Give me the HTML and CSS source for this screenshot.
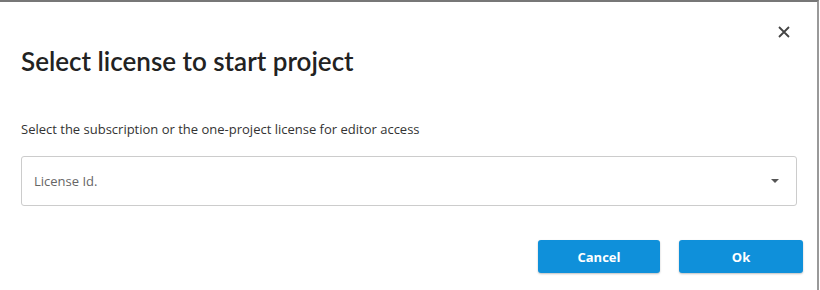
FILE: index.html
```html
<!DOCTYPE html>
<html lang="en">
<head>
  <meta charset="UTF-8" />
  <title>Select license</title>
  <link rel="stylesheet" href="styles.css">
</head>
<body>
  <div class="dialog">
    <div class="dialog-top">
      <button class="close-button" aria-label="Close">
        <svg width="12" height="12" viewBox="0 0 12 12">
          <path d="M1 1 L11 11 M11 1 L1 11" stroke="#444" stroke-width="1.8" fill="none" />
        </svg>
      </button>
    </div>
    <h2 class="dialog-title">Select license to start project</h2>
    <p class="dialog-text">Select the subscription or the one-project license for editor access</p>
    <div class="select-box">
      <span class="placeholder">License Id.</span>
      <span class="caret"></span>
    </div>
    <div class="dialog-footer">
      <button class="btn btn-cancel">Cancel</button>
      <button class="btn btn-ok">Ok</button>
    </div>
  </div>
</body>
</html>
```
FILE: styles.css
```css
body {
  margin: 0;
  font-family: "Open Sans", Arial, sans-serif;
  background-color: #fff;
  color: #222;
}

.dialog {
  width: 819px;
  height: 290px;
  box-sizing: border-box;
  border-top: 2px solid #777;
  border-right: 2px solid #999;
  background-color: #fff;
  padding: 0 20px 0 21px;
}

.dialog-top {
  display: flex;
  justify-content: flex-end;
  padding-top: 24px;
  height: 14px;
}

.close-button {
  background: none;
  border: none;
  padding: 0;
  margin-right: 7px;
  width: 12px;
  height: 12px;
  cursor: pointer;
}

.dialog-title {
  margin: 4px 0 0;
  font-family: Lato, "Open Sans", sans-serif;
  font-size: 26px;
  font-weight: 600;
  line-height: 34px;
  color: #222;
}

.dialog-text {
  margin: 42px 0 0;
  font-size: 13px;
  line-height: 18px;
  color: #333;
}

.select-box {
  margin-top: 18px;
  height: 50px;
  box-sizing: border-box;
  border: 1px solid #ccc;
  border-radius: 3px;
  display: flex;
  align-items: center;
  justify-content: space-between;
  padding: 0 17px 0 12px;
}

.placeholder {
  font-size: 13px;
  color: #666;
}

.caret {
  width: 0;
  height: 0;
  border-left: 4px solid transparent;
  border-right: 4px solid transparent;
  border-top: 4px solid #555;
}

.dialog-footer {
  display: flex;
  justify-content: flex-end;
  gap: 19px;
  margin-top: 34px;
  margin-right: -6px;
}

.btn {
  height: 33px;
  border: none;
  border-radius: 3px;
  background-color: #0f90da;
  color: #fff;
  font-family: "Open Sans", Arial, sans-serif;
  font-size: 13px;
  font-weight: 700;
  box-shadow: 0 1px 2px rgba(0, 0, 0, 0.25);
  cursor: pointer;
}

.btn-cancel {
  width: 122px;
}

.btn-ok {
  width: 124px;
}
```
